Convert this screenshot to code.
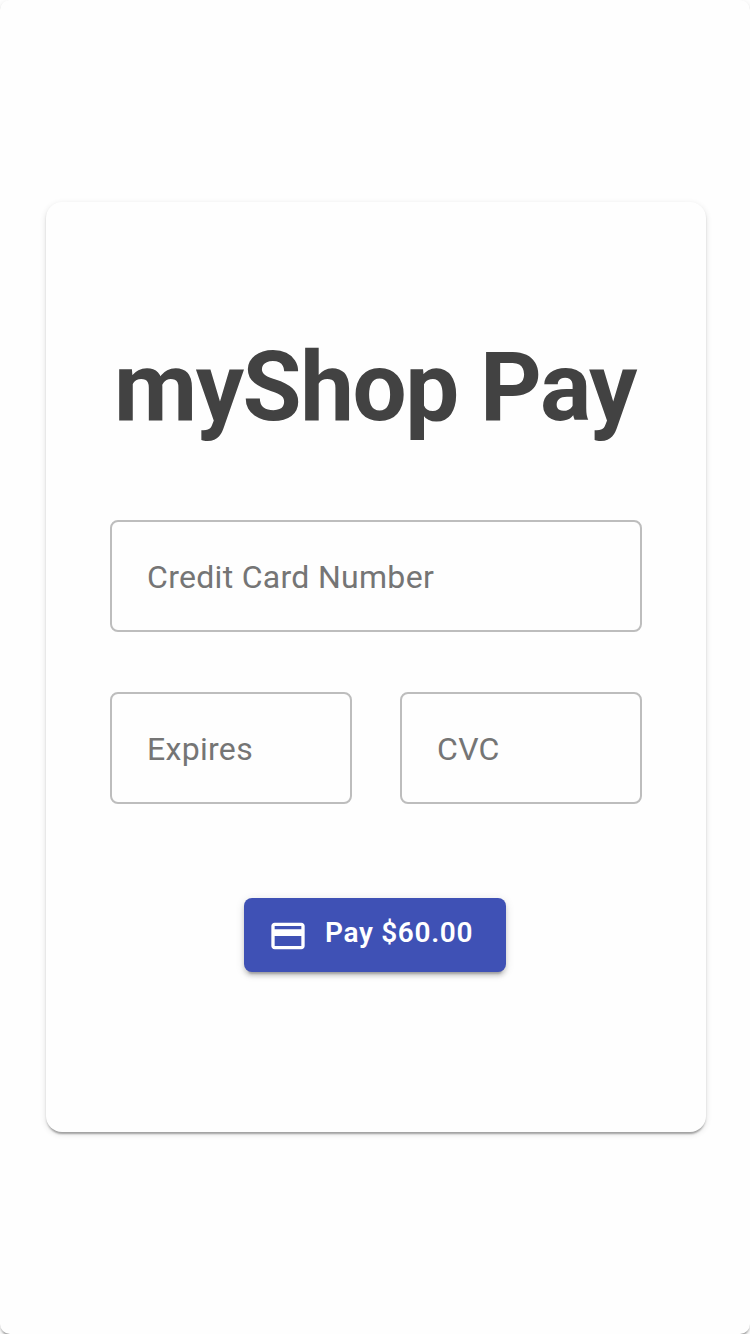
<main>
  <section class="card">
    <h1>myShop Pay</h1>
    <form>
      <input class="field" placeholder="Credit Card Number" />
      <div class="row">
        <input class="field" placeholder="Expires" />
        <input class="field" placeholder="CVC" />
      </div>
      <button type="button">
        <svg width="40" height="40" viewBox="0 0 24 24" fill="#fff"><path d="M20 4H4c-1.11 0-1.99.89-1.99 2L2 18c0 1.11.89 2 2 2h16c1.11 0 2-.89 2-2V6c0-1.11-.89-2-2-2zm0 14H4v-6h16v6zm0-10H4V6h16v2z" /></svg>
        <span>Pay $60.00</span>
      </button>
    </form>
  </section>
</main>

<style>
  :global(body) { background: #fff; overflow: hidden; }
  main { box-sizing: border-box; height: 1334px; padding: 202px 44px 0 46px; border-radius: 10px; background: #fefefe; box-shadow: 0 4px 2px -2px rgba(0,0,0,.2), 0 2px 2px rgba(0,0,0,.14), 0 2px 6px rgba(0,0,0,.12); font-family: Roboto, sans-serif; }
  .card { box-sizing: border-box; height: 930px; padding: 129px 64px 0; border-radius: 16px; background: #fefefe; box-shadow: 0 4px 2px -2px rgba(0,0,0,.2), 0 2px 2px rgba(0,0,0,.14), 0 2px 6px rgba(0,0,0,.12); }
  h1 { margin: 0; padding-right: 2px; height: 189px; line-height: 112px; font-size: 96px; font-weight: 700; letter-spacing: -1.5px; color: #424242; text-align: center; white-space: nowrap; }
  form { display: flex; flex-direction: column; }
  .field { box-sizing: border-box; width: 100%; min-width: 0; height: 112px; margin: 0; padding: 2px 35px 0; border: 2px solid #bdbdbd; border-radius: 8px; outline: 0; background: transparent; font: 400 32px Roboto, sans-serif; letter-spacing: .3px; color: #424242; }
  .field::placeholder { color: #757575; opacity: 1; }
  .row { display: grid; grid-template-columns: 1fr 1fr; gap: 48px; margin-top: 60px; }
  button { box-sizing: border-box; align-self: center; display: flex; align-items: center; width: 262px; height: 74px; margin: 94px 2px 0 0; padding: 0 0 0 24px; border: 0; border-radius: 8px; background: #3f51b5; color: #fff; font: 600 28px/70px Roboto, sans-serif; letter-spacing: .67px; box-shadow: 0 6px 2px -4px rgba(0,0,0,.2), 0 4px 4px rgba(0,0,0,.14), 0 2px 10px rgba(0,0,0,.12); }
  svg { margin: 2px 17px 0 0; }
  span { height: 74px; }
</style>
